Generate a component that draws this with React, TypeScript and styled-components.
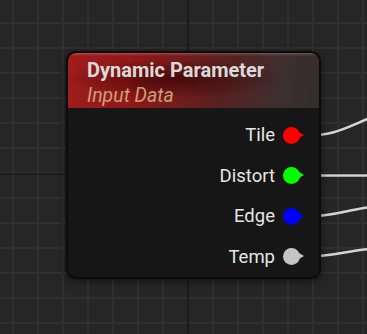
import React from 'react';
import styled, { createGlobalStyle } from 'styled-components';

const GlobalStyle = createGlobalStyle`
  html, body {
    margin: 0;
    padding: 0;
    background: #262626;
  }
`;

const Canvas = styled.div`
  position: relative;
  width: 367px;
  height: 334px;
  overflow: hidden;
  background-color: #262626;
  background-image:
    linear-gradient(to right, transparent 187px, #1b1b1b 187px, #1b1b1b 189px, transparent 189px),
    linear-gradient(to bottom, transparent 173px, #1b1b1b 173px, #1b1b1b 175px, transparent 175px),
    linear-gradient(to right, #303030 2px, transparent 2px),
    linear-gradient(to bottom, #303030 2px, transparent 2px);
  background-size: 100% 100%, 100% 100%, 25px 25px, 25px 25px;
  background-position: 0 0, 0 0, 12px 0, 0 22px;
  font-family: Roboto, 'Liberation Sans', sans-serif;
`;

const Wires = styled.svg`
  position: absolute;
  left: 0;
  top: 0;
`;

const Node = styled.div`
  position: absolute;
  left: 66px;
  top: 51px;
  width: 255px;
  height: 228px;
  box-sizing: border-box;
  border: 2px solid #0b0b0b;
  border-radius: 10px;
  background: #151615;
  box-shadow: 0 2px 8px rgba(0, 0, 0, 0.55);
  overflow: hidden;
  display: flex;
  flex-direction: column;
`;

const Header = styled.div`
  height: 60px;
  box-sizing: border-box;
  padding: 5px 0 0 19px;
  border-radius: 8px 8px 0 0;
  background:
    linear-gradient(180deg, rgba(255, 200, 200, 0.25) 0, rgba(255, 255, 255, 0) 3px),
    radial-gradient(ellipse 110px 20px at 105px 26px, rgba(45, 0, 0, 0.65), transparent),
    linear-gradient(100deg, #a11d1d 0%, #8e1818 28%, #5a2020 60%, #3c2f2f 85%, #332d2d 100%);
  display: flex;
  flex-direction: column;
`;

const Title = styled.div`
  font-size: 20px;
  font-weight: 700;
  color: #dadada;
  line-height: 25px;
`;

const Subtitle = styled.div`
  font-size: 19.5px;
  font-style: italic;
  color: #c9a07c;
  line-height: 25px;
`;

const Pins = styled.div`
  display: flex;
  flex-direction: column;
  align-items: flex-end;
  padding: 7px 13px 0 0;
`;

const PinRow = styled.div`
  display: flex;
  align-items: center;
  height: 40.5px;
  gap: 8px;
`;

const PinLabel = styled.span`
  font-size: 18.5px;
  color: #e6e6e6;
`;

const Pin = styled.span<{ $color: string }>`
  position: relative;
  width: 17px;
  height: 17px;
  border-radius: 50%;
  background: ${(p) => p.$color};
  margin-right: 6px;

  &::after {
    content: '';
    position: absolute;
    left: 16px;
    top: 5px;
    border-left: 5px solid ${(p) => p.$color};
    border-top: 3.5px solid transparent;
    border-bottom: 3.5px solid transparent;
  }
`;

const pins = [
  { label: 'Tile', color: '#ff0000' },
  { label: 'Distort', color: '#00ff00' },
  { label: 'Edge', color: '#0000ff' },
  { label: 'Temp', color: '#c4c4c4' },
];

export default function App() {
  return (
    <>
      <GlobalStyle />
      <Canvas>
        <Wires width="367" height="334">
          <g fill="none" stroke="#d4d4d4" strokeWidth="2.5">
            <path d="M305 135.5 C 335 135.5, 345 128, 370 118" />
            <path d="M305 175.5 L 370 175.5" />
            <path d="M305 216.5 C 335 216.5, 345 210, 370 207" />
            <path d="M305 256.5 C 335 256.5, 345 251, 370 249" />
          </g>
        </Wires>
        <Node>
          <Header>
            <Title>Dynamic Parameter</Title>
            <Subtitle>Input Data</Subtitle>
          </Header>
          <Pins>
            {pins.map((p) => (
              <PinRow key={p.label}>
                <PinLabel>{p.label}</PinLabel>
                <Pin $color={p.color} />
              </PinRow>
            ))}
          </Pins>
        </Node>
      </Canvas>
    </>
  );
}
